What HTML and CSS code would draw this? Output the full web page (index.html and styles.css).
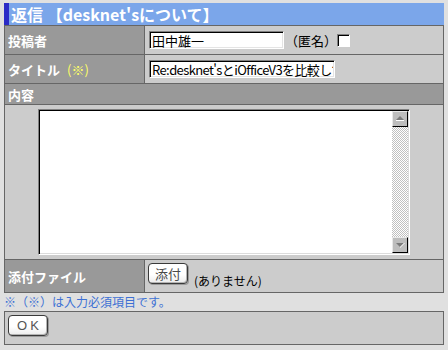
FILE: index.html
```html
<!DOCTYPE html>
<html lang="ja">
<head>
<meta charset="utf-8">
<title>返信</title>
<link rel="stylesheet" href="styles.css">
</head>
<body>
<div class="page">
  <div class="title">返信 【desknet'sについて】</div>
  <div class="form">
    <div class="label">投稿者</div>
    <div class="value">
      <input class="text name" value="田中雄一">
      <span class="anon">（匿名）</span>
      <input type="checkbox" class="check">
    </div>
    <div class="label">タイトル<span class="req">(※)</span></div>
    <div class="value"><input class="text subject" value="Re:desknet'sとiOfficeV3を比較して"></div>
    <div class="label wide">内容</div>
    <div class="body-cell wide">
      <div class="textarea">
        <textarea></textarea>
        <div class="scrollbar">
          <div class="sb-btn"><svg width="14" height="14" viewBox="0 0 14 14"><polygon points="3,8 11,8 7,4" fill="#7a7a7a"/><rect x="3" y="8" width="8" height="1" fill="#fff"/></svg></div>
          <div class="sb-track"></div>
          <div class="sb-btn"><svg width="14" height="14" viewBox="0 0 14 14"><polygon points="3,5 11,5 7,9" fill="#7a7a7a"/><polygon points="11,5 12,5 7,10 7,9" fill="#fff"/></svg></div>
        </div>
      </div>
    </div>
    <div class="label">添付ファイル</div>
    <div class="value attach"><button class="btn">添付</button><span class="none">(ありません)</span></div>
  </div>
  <div class="note">※（※）は入力必須項目です。</div>
  <div class="actions"><button class="btn ok">OK</button></div>
</div>
</body>
</html>
```
FILE: styles.css
```css
* { box-sizing: border-box; }
body {
  margin: 3px 4px;
  background: #e0e0e0;
  font-family: "Noto Sans CJK JP", "Noto Sans", sans-serif;
  font-size: 13px;
}
.page { width: 440px; }
.title {
  height: 22px;
  background: #7ba6ea;
  border-left: 5px solid #2b2bc6;
  color: #fff;
  font-weight: bold;
  font-size: 16px;
  line-height: 22px;
  padding-left: 2px;
  white-space: nowrap;
}
.form {
  display: grid;
  grid-template-columns: 139px 298px;
  grid-template-rows: 28px 28px 20px 154px 32px;
  gap: 1px;
  padding: 1px;
  background: #666;
}
.label {
  background: #999;
  color: #fff;
  font-weight: bold;
  display: flex;
  align-items: center;
  padding-left: 3px;
  white-space: nowrap;
}
.req {
  color: #ffff66;
  font-weight: normal;
  margin-left: 7px;
}
.value {
  background: #ccc;
  display: flex;
  align-items: center;
  padding-left: 4px;
}
.wide { grid-column: 1 / span 2; }
.text {
  height: 18px;
  margin: 0;
  padding: 0 1px 0 2px;
  border: 1px solid;
  border-color: #808080 #fff #fff #808080;
  box-shadow: inset 1px 1px 0 #000, inset -1px -1px 0 #e4e4e4;
  background: #fff;
  font-family: "Noto Sans CJK JP", sans-serif;
  font-size: 13px;
  color: #000;
  outline: none;
}
.name { width: 135px; }
.subject { width: 186px; letter-spacing: -0.6px; }
.anon { margin-left: 1px; color: #000; }
.check {
  appearance: none;
  -webkit-appearance: none;
  width: 13px;
  height: 13px;
  margin: 0 0 0 0;
  border: 1px solid;
  border-color: #808080 #fff #fff #808080;
  box-shadow: inset 1px 1px 0 #000;
  background: #fff;
}
.body-cell {
  background: #ccc;
  padding: 4px 0 0 33px;
}
.textarea {
  width: 372px;
  height: 146px;
  display: flex;
  border: 1px solid;
  border-color: #808080 #fff #fff #808080;
  box-shadow: inset 1px 1px 0 #000, inset -1px -1px 0 #dcdcdc;
  background: #fff;
  padding: 1px;
}
.textarea textarea {
  flex: 1;
  border: none;
  margin: 0;
  padding: 0;
  resize: none;
  outline: none;
  background: #fff;
}
.scrollbar {
  width: 16px;
  display: flex;
  flex-direction: column;
}
.sb-btn {
  height: 16px;
  background: #bdbdbd;
  border: 1px solid;
  border-color: #e8e8e8 #000 #000 #e8e8e8;
  display: flex;
}
.sb-btn svg { display: block; }
.sb-track {
  flex: 1;
  background: repeating-conic-gradient(#c0c0c0 0 25%, #fff 0 50%) 0 0 / 2px 2px;
}
.attach {
  align-items: flex-start;
  padding: 3px 0 0 3px;
}
.btn {
  width: 40px;
  height: 21px;
  margin: 0;
  padding: 0;
  border: 1px solid #3a3a3a;
  border-radius: 4px;
  background: linear-gradient(#fff, #fff 55%, #ececec);
  box-shadow: inset -1px -1px 0 #b4b4b4, 1px 1px 0 #9a9a9a;
  font-family: "Noto Sans CJK JP", sans-serif;
  font-size: 13px;
  line-height: 17px;
  color: #4a4a4a;
}
.none {
  margin: 10px 0 0 6px;
  font-size: 12px;
  line-height: 16px;
  color: #000;
}
.note {
  height: 18px;
  line-height: 18px;
  font-size: 12px;
  color: #3d70d4;
  white-space: nowrap;
}
.actions {
  height: 34px;
  border: 1px solid #666;
  background: #ccc;
  padding: 3px;
}
.ok {
  font-family: "Liberation Sans", sans-serif;
  letter-spacing: 3px;
  padding-left: 3px;
  color: #555;
}
```
